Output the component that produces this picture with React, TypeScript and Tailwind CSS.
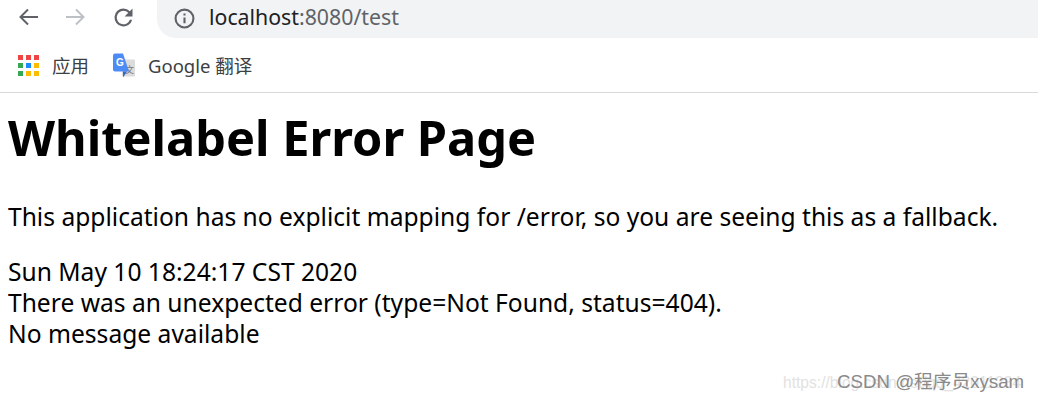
import React from 'react';

const font = { fontFamily: '"Noto Sans", "Noto Sans CJK SC", sans-serif' };

const AppsIcon = () => {
  const colors = ['#ef4444', '#ef4444', '#ef4444', '#34a853', '#1a8cff', '#fbbc04', '#34a853', '#fbbc04', '#fbbc04'];
  return (
    <div className="grid grid-cols-3 gap-[3px] w-[21px]">
      {colors.map((c, i) => (
        <div key={i} className="w-[5px] h-[5px]" style={{ backgroundColor: c }} />
      ))}
    </div>
  );
};

const TranslateIcon = () => (
  <svg width="24" height="27" viewBox="0 0 24 26">
    <rect x="10" y="6" width="13" height="17" rx="1" fill="#dcdcdc" />
    <text x="13" y="19" fontSize="9" fill="#777" fontFamily="Noto Sans CJK SC">文</text>
    <path d="M1 2 Q1 0 3 0 L11 0 L17 18 L3 18 Q1 18 1 16 Z" fill="#4c8bf5" />
    <path d="M11 18 L15 18 L11 24 Z" fill="#3367c8" />
    <text x="4" y="12" fontSize="10" fontWeight="700" fill="#fff" fontFamily="Liberation Sans">G</text>
  </svg>
);

export default function App() {
  return (
    <div className="w-[1038px] h-[402px] bg-white relative overflow-hidden text-black" style={font}>
      {/* Toolbar */}
      <div className="h-[38px] flex items-center">
        <div className="flex items-center pl-[18px] gap-[28px] w-[157px] pb-[4px]">
          <svg width="20" height="20" viewBox="0 0 20 20" fill="none" stroke="#5f6368" strokeWidth="2">
            <path d="M20 10H2M10 2.5 2.5 10l7.5 7.5" />
          </svg>
          <svg width="20" height="20" viewBox="0 0 20 20" fill="none" stroke="#bdc1c6" strokeWidth="2">
            <path d="M0 10h18M10 2.5l7.5 7.5-7.5 7.5" />
          </svg>
          <svg width="27" height="27" viewBox="0 0 24 24" fill="#5f6368" className="-ml-[4px]">
            <path d="M17.65 6.35A7.96 7.96 0 0 0 12 4a8 8 0 1 0 7.73 10h-2.08A6 6 0 1 1 12 6c1.66 0 3.14.69 4.22 1.78L13 11h7V4l-2.35 2.35z" />
          </svg>
        </div>
        <div className="flex-1 h-[38px] bg-[#f1f3f4] rounded-bl-[19px] flex items-center pl-[17px]">
          <svg width="21" height="21" viewBox="0 0 20 20" fill="none" stroke="#5f6368" strokeWidth="2" className="mb-[2px]">
            <circle cx="10" cy="10" r="8.5" />
            <path d="M10 9v5.5M10 5.2v2" />
          </svg>
          <span className="ml-[14px] text-[21.3px] leading-none text-[#202124] mb-[4px]">
            localhost<span className="text-[#5f6368]">:8080/test</span>
          </span>
        </div>
      </div>

      {/* Bookmarks */}
      <div className="h-[55px] flex items-center border-b border-[#d9d9d9] pl-[18px]">
        <AppsIcon />
        <span className="ml-[13px] text-[18.5px] text-[#3c4043] mt-[2px]">应用</span>
        <div className="ml-[23px] mt-[2px]"><TranslateIcon /></div>
        <span className="ml-[12px] text-[18.5px] text-[#3c4043] mt-[2px]">Google 翻译</span>
      </div>

      {/* Page */}
      <div className="pl-[8px]">
        <h1 className="mt-[11px] text-[48.7px] leading-[66px] font-bold">Whitelabel Error Page</h1>
        <p className="mt-[31px] text-[24.6px] leading-[31px]">
          This application has no explicit mapping for /error, so you are seeing this as a fallback.
        </p>
        <div className="mt-[24px] text-[24.6px] leading-[31px]">
          <div>Sun May 10 18:24:17 CST 2020</div>
          <div>There was an unexpected error (type=Not Found, status=404).</div>
          <div>No message available</div>
        </div>
      </div>

      {/* Watermark */}
      <div className="absolute left-[783px] top-[375px] text-[15.6px] leading-[16px] text-[#e2e2e2] whitespace-nowrap" style={{ fontFamily: '"Liberation Sans", sans-serif' }}>
        https://blog.csdn.net/qq_42011234
      </div>
      <div className="absolute left-[837px] top-[372px] text-[18.7px] leading-[20px] text-[#8a8a8a] whitespace-nowrap" style={{ fontFamily: '"Liberation Sans", "Noto Sans CJK SC", sans-serif' }}>
        CSDN @程序员xysam
      </div>
    </div>
  );
}
